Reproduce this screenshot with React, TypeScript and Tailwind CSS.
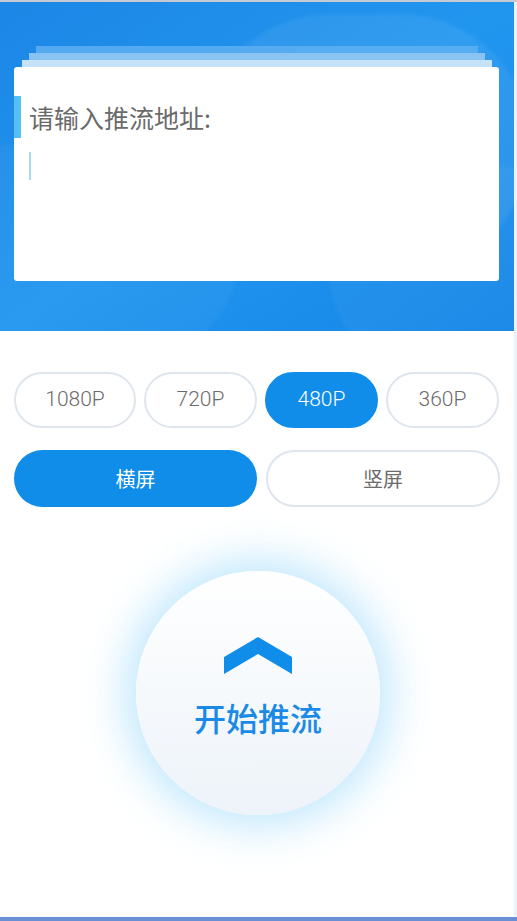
import React from "react";

const cjk = { fontFamily: '"Noto Sans CJK SC", "Noto Sans", sans-serif' };
const num = { fontFamily: 'Roboto, "Noto Sans CJK SC", sans-serif' };

function Res({ label, active, w }: { label: string; active?: boolean; w: string }) {
  return (
    <div
      className={`${w} h-[56px] rounded-full flex items-center justify-center text-[21px] font-light ${
        active ? "bg-[#108de9] text-white border-2 border-[#108de9]" : "bg-white text-[#6b6b6b] border-2 border-[#dfe5ec]"
      }`}
      style={num}
    >
      {label}
    </div>
  );
}

export default function App() {
  return (
    <div className="w-[517px] h-[921px] flex flex-col bg-white overflow-hidden">
      <div className="h-[2px] bg-[#c5cad3]" />
      <div className="flex flex-1">
        <div className="w-[514px] flex flex-col">
          {/* header */}
          <div className="relative h-[329px] overflow-hidden bg-gradient-to-br from-[#1d86e6] via-[#2196ef] to-[#1586e8]">
            <div className="absolute left-[200px] top-[12px] w-[330px] h-[260px] rounded-full bg-white/[0.07] blur-[2px]" />
            <div className="absolute left-[-80px] top-[140px] w-[320px] h-[220px] rounded-full bg-white/[0.04] blur-[2px]" />
            <div className="absolute left-[330px] top-[160px] w-[260px] h-[220px] rounded-full bg-white/[0.04] blur-[2px]" />
            <div className="relative flex flex-col pt-[44px]">
              <div className="h-[7px] ml-[36px] mr-[36px] bg-[#62b2f1]/80" />
              <div className="h-[7px] ml-[29px] mr-[29px] bg-[#93c9f4]/90" />
              <div className="h-[7px] ml-[22px] mr-[22px] bg-[#c6e2f8]" />
              <div className="ml-[14px] mr-[15px] h-[214px] bg-white rounded-[3px] flex flex-col">
                <div className="mt-[29px] flex items-center h-[42px]">
                  <div className="w-[7px] h-[42px] bg-[#55c0f6]" />
                  <div className="ml-[8px] text-[25px] text-[#6a6a6a] leading-none" style={cjk}>
                    请输入推流地址:
                  </div>
                </div>
                <div className="ml-[15px] mt-[14px] w-[2px] h-[28px] bg-[#a3ddef]" />
              </div>
            </div>
          </div>

          {/* resolution */}
          <div className="flex gap-[8px] pl-[14px] mt-[41px]">
            <Res label="1080P" w="w-[122px]" />
            <Res label="720P" w="w-[113px]" />
            <Res label="480P" active w="w-[113px]" />
            <Res label="360P" w="w-[113px]" />
          </div>

          {/* orientation */}
          <div className="flex gap-[9px] pl-[14px] mt-[22px]">
            <div className="w-[243px] h-[57px] rounded-full bg-[#108de9] text-white flex items-center justify-center text-[20px]" style={cjk}>
              横屏
            </div>
            <div className="w-[234px] h-[57px] rounded-full bg-white border-2 border-[#dfe5ec] text-[#6b6b6b] flex items-center justify-center text-[20px]" style={cjk}>
              竖屏
            </div>
          </div>

          {/* start button */}
          <div className="flex justify-center mt-[64px]">
            <div className="w-[244px] h-[244px] rounded-full bg-gradient-to-b from-white to-[#edf3f9] shadow-[0_0_40px_12px_rgba(120,205,250,0.45)] flex flex-col items-center ml-[2px]">
              <svg className="mt-[66px]" width="68" height="37" viewBox="0 0 68 37">
                <polygon points="0,20 34,0 68,20 68,37 34,17 0,37" fill="#108de9" />
              </svg>
              <div className="mt-[27px] text-[32px] font-medium text-[#1a8ae6] leading-none" style={cjk}>
                开始推流
              </div>
            </div>
          </div>
        </div>
        <div className="w-[3px] bg-[#edf2f9]" />
      </div>
      <div className="h-[4px] bg-[#6a8fd5]" />
    </div>
  );
}
